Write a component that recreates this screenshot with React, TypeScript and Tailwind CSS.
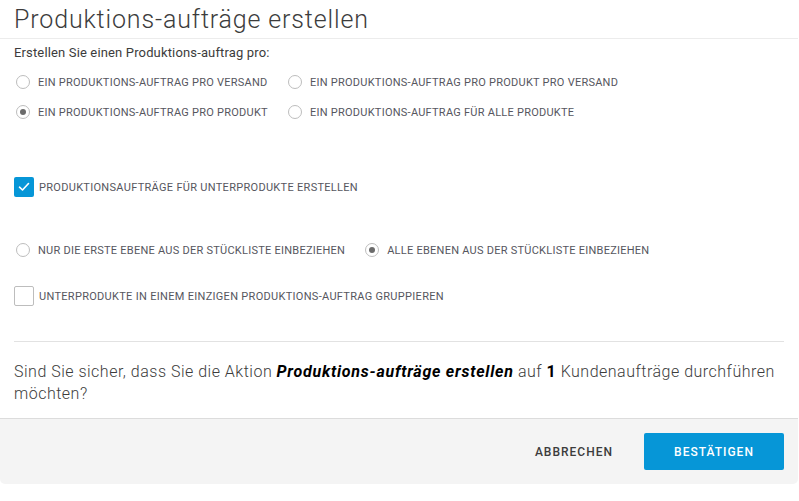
import React from "react";

function Radio({ checked, label }: { checked?: boolean; label: string }) {
  return (
    <div className="flex items-center gap-[8px]">
      <span className="w-[14px] h-[14px] rounded-full border border-[#bdbdbd] bg-white flex items-center justify-center shrink-0">
        {checked && <span className="w-[6px] h-[6px] rounded-full bg-[#6b6b6b]" />}
      </span>
      <span className="text-[11px] text-[#56565e] tracking-[0.25px] whitespace-nowrap leading-none">{label}</span>
    </div>
  );
}

function Checkbox({ checked, label }: { checked?: boolean; label: string }) {
  return (
    <div className="flex items-center gap-[5px] h-[20px]">
      {checked ? (
        <span className="w-[20px] h-[20px] rounded-[2px] bg-[#0696d7] flex items-center justify-center shrink-0">
          <svg width="12" height="10" viewBox="0 0 12 10" fill="none">
            <path d="M1.5 5.2 L4.5 8 L10.5 1.5" stroke="white" strokeWidth="1.6" strokeLinecap="round" strokeLinejoin="round" />
          </svg>
        </span>
      ) : (
        <span className="w-[20px] h-[20px] rounded-[2px] border border-[#bdbdbd] bg-white shrink-0" />
      )}
      <span className="text-[11px] text-[#56565e] tracking-[0.3px] whitespace-nowrap leading-none">{label}</span>
    </div>
  );
}

export default function App() {
  return (
    <div className="w-[799px] h-[501px] bg-white font-['Roboto',sans-serif] text-[#3c3c3c]">
      <div className="w-[798px]">
        <div className="h-[39px] border-b border-[#ececec] px-[14px] flex items-center">
          <h1 className="text-[25px] font-light leading-none text-[#3c3c3c] tracking-[0.85px]">Produktions-aufträge erstellen</h1>
        </div>
        <div className="px-[14px]">
          <div className="h-[28px] flex items-center text-[13px] text-[#3c3c3c] tracking-[0.15px]">Erstellen Sie einen Produktions-auftrag pro:</div>
          <div className="pl-[2px] grid grid-cols-[272px_1fr]">
            <div className="h-[30px] flex items-center"><Radio label="EIN PRODUKTIONS-AUFTRAG PRO VERSAND" /></div>
            <div className="h-[30px] flex items-center"><Radio label="EIN PRODUKTIONS-AUFTRAG PRO PRODUKT PRO VERSAND" /></div>
            <div className="h-[30px] flex items-center"><Radio checked label="EIN PRODUKTIONS-AUFTRAG PRO PRODUKT" /></div>
            <div className="h-[30px] flex items-center"><Radio label="EIN PRODUKTIONS-AUFTRAG FÜR ALLE PRODUKTE" /></div>
          </div>
          <div className="mt-[50px]">
            <Checkbox checked label="PRODUKTIONSAUFTRÄGE FÜR UNTERPRODUKTE ERSTELLEN" />
          </div>
          <div className="mt-[43px] h-[20px] pl-[2px] flex items-center gap-[20px]">
            <Radio label="NUR DIE ERSTE EBENE AUS DER STÜCKLISTE EINBEZIEHEN" />
            <Radio checked label="ALLE EBENEN AUS DER STÜCKLISTE EINBEZIEHEN" />
          </div>
          <div className="mt-[26px]">
            <Checkbox label="UNTERPRODUKTE IN EINEM EINZIGEN PRODUKTIONS-AUFTRAG GRUPPIEREN" />
          </div>
          <div className="mt-[35px] border-t border-[#e2e2e2]" />
          <p className="mt-[19px] text-[16px] font-light leading-[22px] text-[#3c3c3c] tracking-[0.5px]">
            Sind Sie sicher, dass Sie die Aktion <b className="font-bold italic text-black tracking-[0.75px]">Produktions-aufträge erstellen</b> auf <b className="font-bold text-black">1</b> Kundenaufträge durchführen möchten?
          </p>
        </div>
        <div className="mt-[13px] border-t border-[#dcdcdc] bg-[#f4f4f4] h-[66px] rounded-b-[5px] flex items-center justify-end pr-[14px]">
          <button className="mr-[31px] text-[12px] font-medium tracking-[1px] text-[#3c3c3c]">ABBRECHEN</button>
          <button className="w-[140px] h-[37px] rounded-[2px] bg-[#0696d7] text-white text-[12px] font-medium tracking-[1px]">BESTÄTIGEN</button>
        </div>
      </div>
    </div>
  );
}
